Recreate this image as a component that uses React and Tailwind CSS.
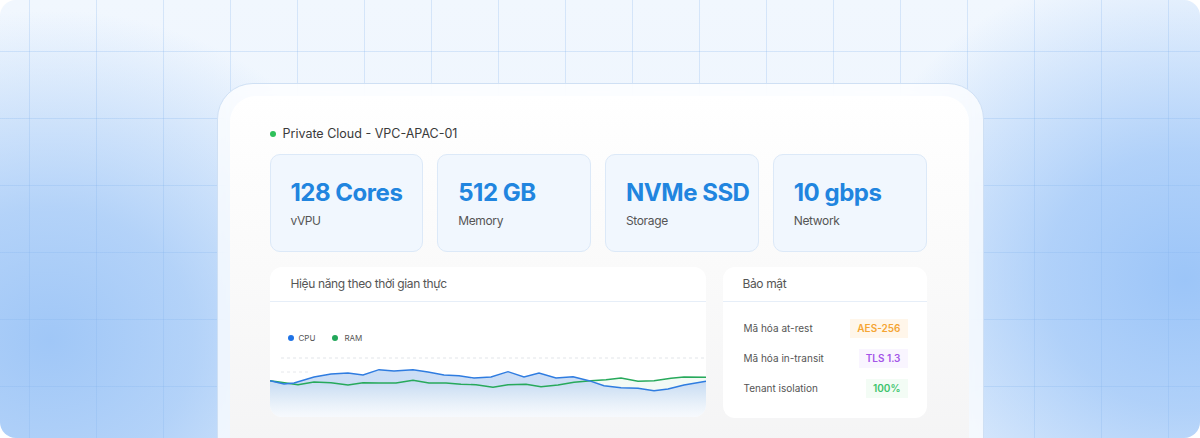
import React from 'react';

const stats = [
  { value: '128 Cores', label: 'vVPU' },
  { value: '512 GB', label: 'Memory' },
  { value: 'NVMe SSD', label: 'Storage' },
  { value: '10 gbps', label: 'Network' },
];

const security = [
  { label: 'Mã hóa at-rest', badge: 'AES-256', tone: 'bg-[#fff6ea] text-[#f5a534]' },
  { label: 'Mã hóa in-transit', badge: 'TLS 1.3', tone: 'bg-[#f9f5ff] text-[#a455e8]' },
  { label: 'Tenant isolation', badge: '100%', tone: 'bg-[#f3fcf5] text-[#3cc46c]' },
];

const cpu = [
  [0, 31.7], [14, 35], [24, 34], [44, 28], [61, 25], [78, 24], [93, 26], [109, 20.7], [124, 22],
  [143, 20.7], [158, 23], [174, 26], [189, 26.7], [204, 29], [221, 28], [238, 22.7], [254, 28],
  [269, 24], [286, 29], [303, 27.7], [319, 31.7], [334, 36.7], [351, 38.7], [368, 39.3],
  [384, 41.7], [398, 40], [414, 36], [436, 32.3],
];

const ram = [
  [0, 31.7], [11, 33.3], [28, 35.7], [44, 33], [61, 33.7], [78, 36], [93, 33.7], [109, 34],
  [126, 34], [143, 31.3], [159, 34], [176, 34], [191, 35.3], [206, 35.7], [223, 38.3],
  [238, 35.7], [256, 35.3], [271, 37.7], [288, 36], [304, 33.3], [321, 31.7], [336, 30.7],
  [351, 29], [368, 32.3], [384, 31.7], [401, 29.3], [414, 28], [436, 28.3],
];

const line = (pts) => pts.map(([x, y], i) => `${i ? 'L' : 'M'}${x} ${y}`).join(' ');
const area = (pts) => `${line(pts)} L436 68 L0 68 Z`;

function Chart() {
  return (
    <svg width="436" height="68" viewBox="0 0 436 68" className="block">
      <defs>
        <linearGradient id="cpuFill" x1="0" y1="0" x2="0" y2="1">
          <stop offset="0.3" stopColor="#c6daf4" stopOpacity="0.9" />
          <stop offset="1" stopColor="#eef4fb" stopOpacity="0.5" />
        </linearGradient>
        <linearGradient id="ramFill" x1="0" y1="0" x2="0" y2="1">
          <stop offset="0.4" stopColor="#e6f5ec" stopOpacity="0.5" />
          <stop offset="1" stopColor="#ffffff" stopOpacity="0" />
        </linearGradient>
      </defs>
      <line x1="11" y1="9" x2="436" y2="9" stroke="#e2e5e9" strokeDasharray="3 3" />
      <line x1="11" y1="23" x2="40" y2="23" stroke="#e6e8ec" strokeDasharray="3 3" />
      <path d={area(ram)} fill="url(#ramFill)" />
      <path d={area(cpu)} fill="url(#cpuFill)" />
      <path d={line(ram)} fill="none" stroke="#27a95b" strokeWidth="1.4" />
      <path d={line(cpu)} fill="none" stroke="#2f7ce0" strokeWidth="1.4" />
    </svg>
  );
}

export default function App() {
  return (
    <div className="w-[1200px] h-[438px] bg-white overflow-hidden font-['Inter',sans-serif]">
      <div className="relative h-full rounded-2xl overflow-hidden [background:radial-gradient(ellipse_360px_330px_at_50px_340px,#a0c7f7_0%,rgba(160,199,247,0.75)_40%,rgba(160,199,247,0)_100%),radial-gradient(ellipse_350px_320px_at_1185px_280px,#9cc5f8_0%,rgba(156,197,248,0.75)_40%,rgba(156,197,248,0)_100%),linear-gradient(180deg,#f1f7fe_0%,#eaf3fd_100%)]">
        {/* grid */}
        <div className="absolute inset-0 [background-image:linear-gradient(to_right,rgba(130,178,236,0.26)_1px,transparent_1px),linear-gradient(to_bottom,rgba(130,178,236,0.26)_1px,transparent_1px)] [background-size:67px_67px] [background-position:29px_51px]" />

        <div className="relative flex justify-center pt-[83px]">
          <div className="w-[767px] h-[400px] rounded-[36px] border border-[#cfe0f4] bg-white/75 backdrop-blur-sm pt-[12px] pl-[12px] pr-[14px]">
            <div className="h-full rounded-[26px] bg-[linear-gradient(180deg,#ffffff_0%,#fafafa_45%,#f3f3f4_100%)] pl-[40px] pr-[42px] pt-[29px]">
              <div className="flex items-center gap-[7px] h-[18px] text-[12.5px] text-[#3a3a3a]">
                <span className="w-[6px] h-[6px] rounded-full bg-[#2ec05a]" />
                Private Cloud - VPC-APAC-01
              </div>

              <div className="mt-[11px] grid grid-cols-4 gap-[14px]">
                {stats.map((s) => (
                  <div key={s.label} className="h-[98px] rounded-[10px] border border-[#dce9f8] bg-[#f1f7fe] px-[20px] pt-[22px]">
                    <div className="whitespace-nowrap text-[24px] leading-[32px] font-bold tracking-[-0.02em] text-[#2185df]">{s.value}</div>
                    <div className="mt-[3px] text-[12px] leading-[18px] tracking-[-0.03em] text-[#555]">{s.label}</div>
                  </div>
                ))}
              </div>

              <div className="mt-[15px] grid grid-cols-[436px_1fr] gap-[17px]">
                <div className="h-[150px] rounded-xl bg-white overflow-hidden">
                  <div className="h-[35px] flex items-center px-[21px] border-b border-[#e6eef8] text-[12px] tracking-[-0.03em] text-[#555]">
                    Hiệu năng theo thời gian thực
                  </div>
                  <div className="pt-[30px]">
                    <div className="flex items-center h-[12px] px-[18px] text-[8px] text-[#555]">
                      <span className="w-[6px] h-[6px] rounded-full bg-[#1f73e6]" />
                      <span className="ml-[5px]">CPU</span>
                      <span className="ml-[17px] w-[6px] h-[6px] rounded-full bg-[#22a75a]" />
                      <span className="ml-[6px]">RAM</span>
                    </div>
                    <div className="mt-[5px]">
                      <Chart />
                    </div>
                  </div>
                </div>

                <div className="h-[151px] rounded-xl bg-white">
                  <div className="h-[35px] flex items-center px-[20px] border-b border-[#e6eef8] text-[12px] tracking-[-0.03em] text-[#555]">
                    Bảo mật
                  </div>
                  <div className="pt-[16px] pl-[21px] pr-[19px] flex flex-col gap-[10px]">
                    {security.map((r) => (
                      <div key={r.label} className="flex items-center justify-between h-[20px]">
                        <span className="text-[10px] text-[#555]">{r.label}</span>
                        <span className={`h-[19px] flex items-center px-[7px] text-[10px] font-semibold ${r.tone}`}>
                          {r.badge}
                        </span>
                      </div>
                    ))}
                  </div>
                </div>
              </div>
            </div>
          </div>
        </div>
      </div>
    </div>
  );
}
